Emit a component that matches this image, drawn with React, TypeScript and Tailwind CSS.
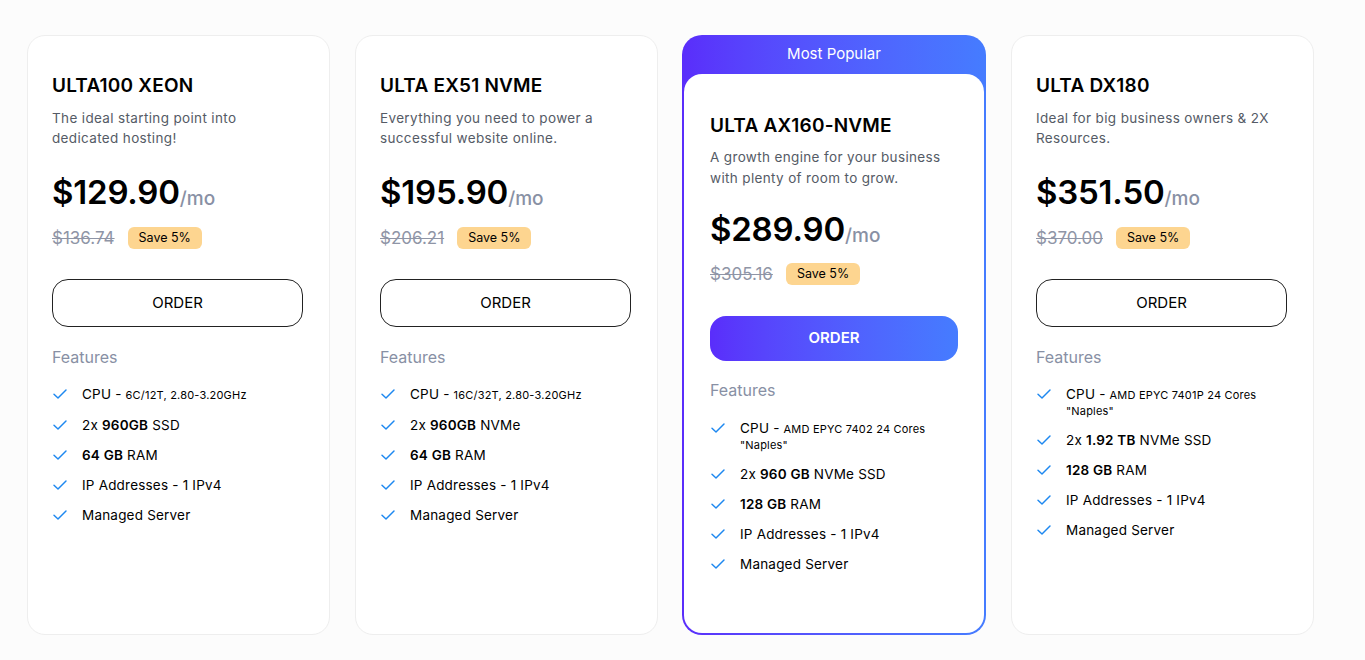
import React from "react";

type Feature = React.ReactNode;

function Check() {
  return (
    <svg width="16" height="16" viewBox="0 0 24 24" fill="none" stroke="#1e88f0" strokeWidth="2.2" strokeLinecap="round" strokeLinejoin="round" className="shrink-0">
      <path d="M3 12.5l6 5.5L21 6" />
    </svg>
  );
}

type Plan = {
  name: string;
  desc: string[];
  price: string;
  old: string;
  features: Feature[];
};

const plans: Plan[] = [
  {
    name: "ULTA100 XEON",
    desc: ["The ideal starting point into", "dedicated hosting!"],
    price: "$129.90",
    old: "$136.74",
    features: [
      <>CPU - <span className="text-[11px]">6C/12T, 2.80-3.20GHz</span></>,
      <>2x <b className="font-semibold">960GB</b> SSD</>,
      <><b className="font-semibold">64 GB</b> RAM</>,
      <>IP Addresses - 1 IPv4</>,
      <>Managed Server</>,
    ],
  },
  {
    name: "ULTA EX51 NVME",
    desc: ["Everything you need to power a", "successful website online."],
    price: "$195.90",
    old: "$206.21",
    features: [
      <>CPU - <span className="text-[11px]">16C/32T, 2.80-3.20GHz</span></>,
      <>2x <b className="font-semibold">960GB</b> NVMe</>,
      <><b className="font-semibold">64 GB</b> RAM</>,
      <>IP Addresses - 1 IPv4</>,
      <>Managed Server</>,
    ],
  },
  {
    name: "ULTA AX160-NVME",
    desc: ["A growth engine for your business", "with plenty of room to grow."],
    price: "$289.90",
    old: "$305.16",
    features: [
      <>CPU - <span className="text-[11px]">AMD EPYC 7402 24 Cores</span><br /><span className="text-[11px]">"Naples"</span></>,
      <>2x <b className="font-semibold">960 GB</b> NVMe SSD</>,
      <><b className="font-semibold">128 GB</b> RAM</>,
      <>IP Addresses - 1 IPv4</>,
      <>Managed Server</>,
    ],
  },
  {
    name: "ULTA DX180",
    desc: ["Ideal for big business owners & 2X", "Resources."],
    price: "$351.50",
    old: "$370.00",
    features: [
      <>CPU - <span className="text-[11px]">AMD EPYC 7401P 24 Cores</span><br /><span className="text-[11px]">"Naples"</span></>,
      <>2x <b className="font-semibold">1.92 TB</b> NVMe SSD</>,
      <><b className="font-semibold">128 GB</b> RAM</>,
      <>IP Addresses - 1 IPv4</>,
      <>Managed Server</>,
    ],
  },
];

function Body({ plan, popular }: { plan: Plan; popular?: boolean }) {
  return (
    <div className={popular ? "px-[26px] pt-[40px]" : "px-[24px] pt-[38px]"}>
      <h3 className="text-[19px] leading-[24px] font-semibold text-black tracking-[0.2px]">{plan.name}</h3>
      <p className={(popular ? "mt-[9px] leading-[20.5px]" : "mt-[10px] leading-[20px]") + " text-[13.5px] tracking-[0.35px] text-[#555b66]"}>
        {plan.desc[0]}
        <br />
        {plan.desc[1]}
      </p>
      <div className={popular ? "mt-[21px] flex items-end" : "mt-[24px] flex items-end"}>
        <span className="text-[33px] leading-[40px] font-semibold text-black tracking-[-0.2px]">{plan.price}</span>
        <span className="text-[19px] leading-[24px] font-medium text-[#8890a4] mb-[1px]">/mo</span>
      </div>
      <div className={(popular ? "mt-[14px]" : "mt-[15px]") + " flex items-center gap-[13px]"}>
        <span className="text-[17px] leading-[22px] text-[#8f95a6] line-through">{plan.old}</span>
        <span className="rounded-[6px] bg-[#fdd590] px-[11px] py-[3px] text-[12.5px] leading-[16px] text-black">Save 5%</span>
      </div>
      {popular ? (
        <button className="mt-[31px] h-[45px] w-[248px] rounded-[16px] bg-gradient-to-r from-[#5a2dfb] to-[#457cff] text-[15px] font-semibold text-white">
          ORDER
        </button>
      ) : (
        <button className="mt-[30px] h-[48px] w-[251px] rounded-[16px] border border-[#222] bg-white text-[15px] text-black">
          ORDER
        </button>
      )}
      <div className={(popular ? "mt-[18px]" : "mt-[19px]") + " text-[16px] leading-[22px] text-[#8890a4]"}>Features</div>
      <ul className={(popular ? "mt-[19px]" : "mt-[18px]") + " flex flex-col gap-[14px]"}>
        {plan.features.map((f, i) => (
          <li key={i} className="flex items-start gap-[14px] text-[13.5px] leading-[14.5px] tracking-[0.2px] text-black">
            <Check />
            <span className="pt-[1px]">{f}</span>
          </li>
        ))}
      </ul>
    </div>
  );
}

export default function App() {
  return (
    <div className="min-h-[660px] w-full bg-[#fcfcfc] pt-[35px] pl-[27px]" style={{ fontFamily: "Inter, 'Noto Sans', sans-serif" }}>
      <div className="flex">
        {plans.map((p, i) =>
          i === 2 ? (
            <div key={i} className="ml-[24px] flex h-[600px] w-[304px] flex-col rounded-[20px] bg-gradient-to-r from-[#5a2dfb] to-[#457cff] p-[2px] pt-0">
              <div className="h-[39px] flex items-center justify-center text-[15px] text-white">Most Popular</div>
              <div className="flex-1 rounded-[18px] bg-white">
                <Body plan={p} popular />
              </div>
            </div>
          ) : (
            <div key={i} className={(i === 0 ? "" : "ml-[25px] ") + "h-[600px] w-[303px] rounded-[18px] border border-[#eeeeee] bg-white"}>
              <Body plan={p} />
            </div>
          )
        )}
      </div>
    </div>
  );
}
